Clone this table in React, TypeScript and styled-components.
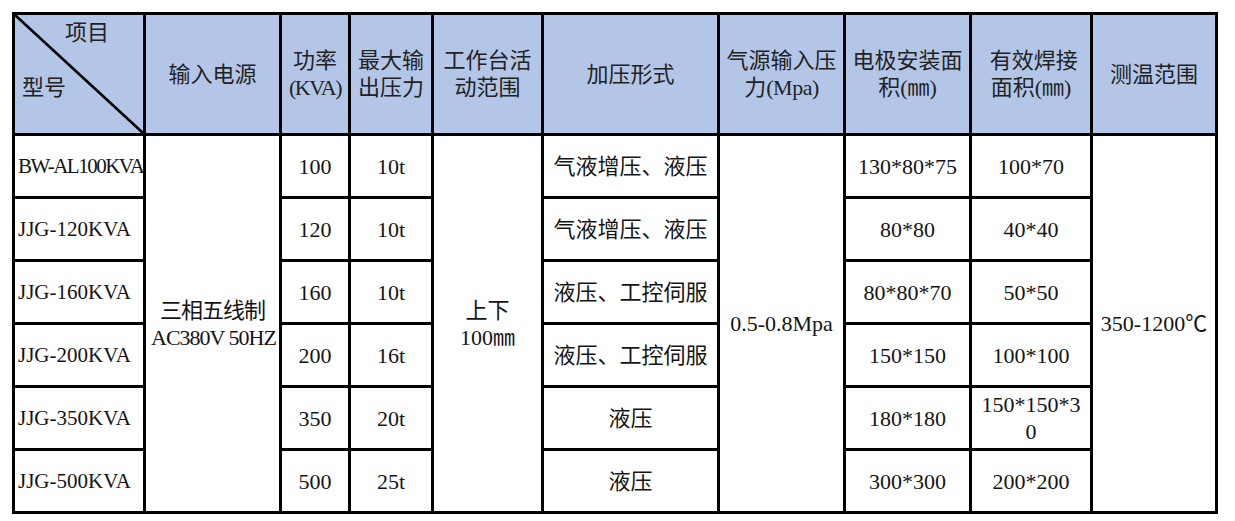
import React from "react";
import styled, { createGlobalStyle } from "styled-components";

const GlobalStyle = createGlobalStyle`
  html, body {
    margin: 0;
    padding: 0;
    background: #ffffff;
  }
  body {
    font-family: "Liberation Serif", "Noto Sans CJK SC", serif;
  }
`;

const Wrapper = styled.div`
  padding: 12px 0 0 12px;
`;

const Table = styled.table`
  border-collapse: collapse;
  table-layout: fixed;
  width: 1206px;
  font-family: "Liberation Serif", "Noto Sans CJK SC", serif;
  font-size: 22px;
  line-height: 27px;
  color: #141414;
`;

const Row = styled.tr<{ $height: number }>`
  height: ${(p) => p.$height}px;
`;

const HeadCell = styled.th`
  background: #b4c6e7;
  border: 3px solid #000;
  font-weight: normal;
  text-align: center;
  vertical-align: middle;
  padding: 0 2px;
  white-space: nowrap;
  color: #222222;
`;

const CornerCell = styled(HeadCell)`
  position: relative;
  vertical-align: top;
  padding: 0;
`;

const Diagonal = styled.svg`
  position: absolute;
  inset: 0;
  width: 100%;
  height: 100%;
  overflow: visible;
`;

const CornerTop = styled.div`
  text-align: right;
  padding: 4px 34px 0 0;
`;

const CornerBottom = styled.div`
  text-align: left;
  padding: 28px 0 0 7px;
`;

// latin runs keep the serif face even next to CJK glyphs
const Latin = styled.span<{ $squeeze?: number }>`
  font-family: "Liberation Serif", serif;
  letter-spacing: ${(p) => (p.$squeeze ? `${-p.$squeeze}px` : "inherit")};
`;

const Cell = styled.td<{ $nowrap?: boolean; $squeeze?: number }>`
  border: 3px solid #000;
  padding: 0 5px;
  text-align: center;
  vertical-align: middle;
  white-space: ${(p) => (p.$nowrap ? "nowrap" : "normal")};
  word-break: break-all;
  letter-spacing: ${(p) => (p.$squeeze ? `${-p.$squeeze}px` : "normal")};
`;

const ModelCell = styled(Cell)`
  text-align: left;
  padding: 0 2px 0 3px;
  font-size: 21px;
  white-space: nowrap;
  overflow: hidden;
`;

const widths = [131, 136, 69, 83, 110, 176, 126, 126, 121, 125];

type Model = {
  model: string;
  kva: string;
  force: string;
  mode: string;
  electrode: string;
  weld: string;
};

const models: Model[] = [
  { model: "BW-AL100KVA", kva: "100", force: "10t", mode: "气液增压、液压", electrode: "130*80*75", weld: "100*70" },
  { model: "JJG-120KVA", kva: "120", force: "10t", mode: "气液增压、液压", electrode: "80*80", weld: "40*40" },
  { model: "JJG-160KVA", kva: "160", force: "10t", mode: "液压、工控伺服", electrode: "80*80*70", weld: "50*50" },
  { model: "JJG-200KVA", kva: "200", force: "16t", mode: "液压、工控伺服", electrode: "150*150", weld: "100*100" },
  { model: "JJG-350KVA", kva: "350", force: "20t", mode: "液压", electrode: "180*180", weld: "150*150*30" },
  { model: "JJG-500KVA", kva: "500", force: "25t", mode: "液压", electrode: "300*300", weld: "200*200" },
];

const App = () => {
  const span = models.length;
  return (
    <Wrapper>
      <GlobalStyle />
      <Table>
        <colgroup>
          {widths.map((w, i) => (
            <col key={i} style={{ width: w }} />
          ))}
        </colgroup>
        <thead>
          <Row $height={121}>
            <CornerCell>
              <Diagonal>
                <line x1="0" y1="0" x2="100%" y2="100%" stroke="#000" strokeWidth="2.6" />
              </Diagonal>
              <CornerTop>项目</CornerTop>
              <CornerBottom>型号</CornerBottom>
            </CornerCell>
            <HeadCell>输入电源</HeadCell>
            <HeadCell>
              功率
              <br />
              <Latin $squeeze={1.5}>(KVA)</Latin>
            </HeadCell>
            <HeadCell>
              最大输
              <br />
              出压力
            </HeadCell>
            <HeadCell>
              工作台活
              <br />
              动范围
            </HeadCell>
            <HeadCell>加压形式</HeadCell>
            <HeadCell>
              气源输入压
              <br />
              力<Latin $squeeze={0.5}>(Mpa)</Latin>
            </HeadCell>
            <HeadCell>
              电极安装面
              <br />
              积<Latin>(</Latin>㎜<Latin>)</Latin>
            </HeadCell>
            <HeadCell>
              &nbsp;有效焊接
              <br />
              面积<Latin>(</Latin>㎜<Latin>)</Latin>
            </HeadCell>
            <HeadCell>测温范围</HeadCell>
          </Row>
        </thead>
        <tbody>
          {models.map((m, i) => (
            <Row key={m.model} $height={63}>
              <ModelCell $squeeze={m.model.startsWith("BW") ? 1.5 : 0}>{m.model}</ModelCell>
              {i === 0 && (
                <Cell rowSpan={span} $nowrap $squeeze={1}>
                  三相五线制
                  <br />
                  <Latin>AC380V 50HZ</Latin>
                </Cell>
              )}
              <Cell>{m.kva}</Cell>
              <Cell>{m.force}</Cell>
              {i === 0 && (
                <Cell rowSpan={span} $nowrap>
                  上下
                  <br />
                  <Latin>100</Latin>㎜
                </Cell>
              )}
              <Cell $nowrap>{m.mode}</Cell>
              {i === 0 && (
                <Cell rowSpan={span} $nowrap>
                  <Latin>0.5-0.8Mpa</Latin>
                </Cell>
              )}
              <Cell>{m.electrode}</Cell>
              <Cell>{m.weld}</Cell>
              {i === 0 && (
                <Cell rowSpan={span} $nowrap>
                  <Latin>350-1200</Latin>℃
                </Cell>
              )}
            </Row>
          ))}
        </tbody>
      </Table>
    </Wrapper>
  );
};

export default App;
